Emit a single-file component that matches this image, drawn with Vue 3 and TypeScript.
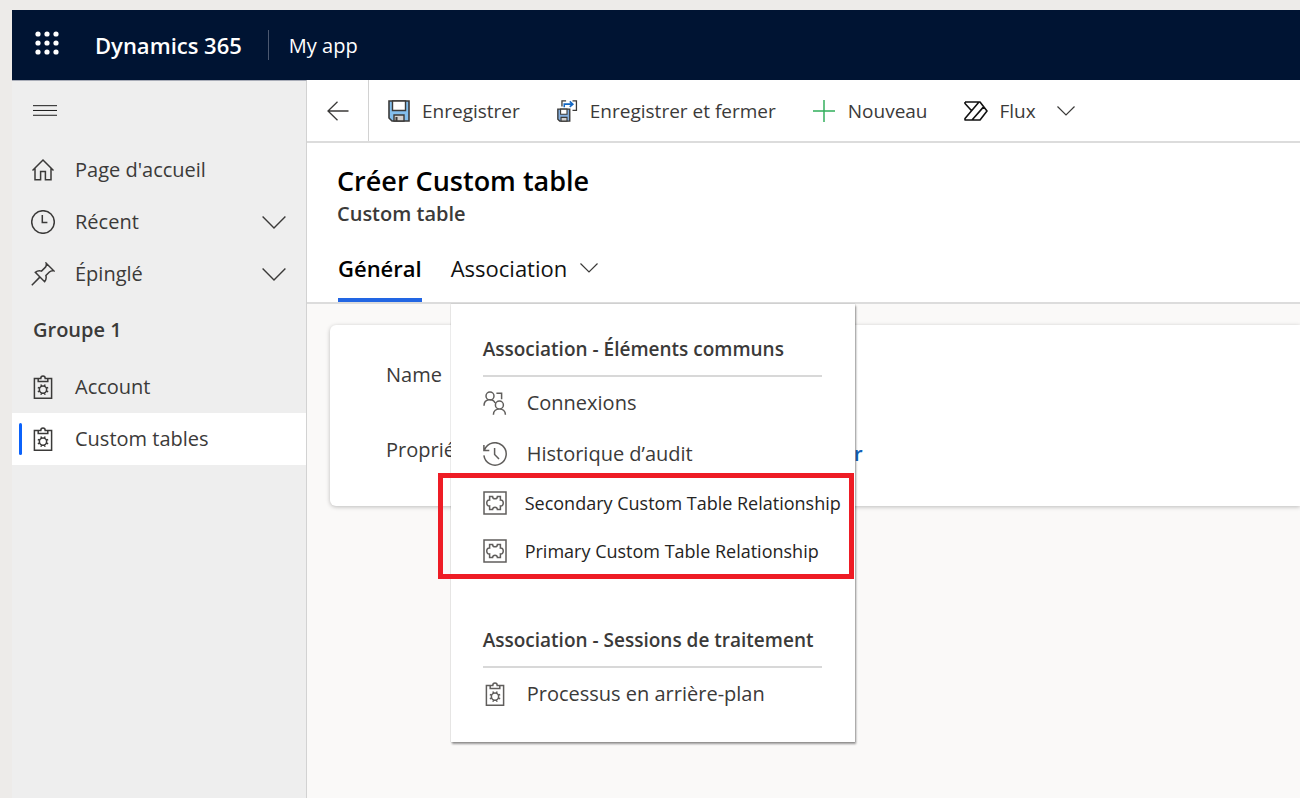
<script setup lang="ts">
import { h, ref, type FunctionalComponent } from 'vue'

type IconName = 'home' | 'clock' | 'pin' | 'clipboard' | 'people' | 'history' | 'puzzle'

const gear: string[] = []
for (let i = 0; i < 8; i++) {
  const a = (i * Math.PI) / 4 + Math.PI / 8
  const c = Math.cos(a)
  const s = Math.sin(a)
  gear.push(`M${(12 + c * 3.6).toFixed(2)} ${(14.6 + s * 3.6).toFixed(2)}L${(12 + c * 5.6).toFixed(2)} ${(14.6 + s * 5.6).toFixed(2)}`)
}

const paths: Record<IconName, string> = {
  home: 'M1.5 12.5L12 2L22.5 12.5M4 10.5V21.7H9.6V13.6H14.4V21.7H20V10.5',
  clock: 'M12 .7A11.3 11.3 0 1 1 12 23.3A11.3 11.3 0 1 1 12 .7ZM11.3 5V12.6H16.4',
  pin: 'M15.2 1.2L22.8 8.8C20.8 8.4 19.6 8.8 18.4 10L14.9 13.5C15.6 16 15.2 17.8 13.6 19.7L4.3 10.4C6.2 8.8 8 8.4 10.5 9.1L14 5.6C15.2 4.4 15.6 3.2 15.2 1.2ZM8.6 15.4L.8 23.2',
  clipboard: `M7.2 3.6H3.4V23.2H20.6V3.6H16.8M7.2 6.4V3.4H9.8C9.8 .2 14.2 .2 14.2 3.4H16.8V6.4ZM12 11A3.6 3.6 0 1 1 12 18.2A3.6 3.6 0 1 1 12 11Z${gear.join('')}`,
  people: 'M7 1A4 4 0 1 1 7 9A4 4 0 1 1 7 1ZM1 14.8C1 7.2 10.5 7.4 12 12M13.4 2.3H18.6V8.2M16.4 10A4 4 0 1 1 16.4 18A4 4 0 1 1 16.4 10ZM10.4 23.8C10.4 16 22.4 16 22.4 23.8',
  history: 'M1.6 7.8A11.2 11.2 0 1 1 .9 13.4M.9 3V8.4H6.3M11.6 6V12.4L16 17',
  puzzle: 'M1 1H23V23H1ZM6.6 9V5.6H9.6C9.8 8.6 14.2 8.6 14.4 5.6H17.4V9C21.2 8.4 21.2 15.6 17.4 15V18.4H14.4C14.2 15.4 9.8 15.4 9.6 18.4H6.6V15C2.8 15.6 2.8 8.4 6.6 9Z',
}

const LineIcon: FunctionalComponent<{ name: IconName }> = (props) =>
  h('svg', { viewBox: '0 0 24 24', fill: 'none', stroke: 'currentColor', 'stroke-width': 1.5, 'aria-hidden': 'true' }, [
    h('path', { d: paths[props.name] }),
  ])
LineIcon.props = ['name']

const shortcuts: { label: string; icon: IconName; expandable: boolean }[] = [
  { label: "Page d'accueil", icon: 'home', expandable: false },
  { label: 'Récent', icon: 'clock', expandable: true },
  { label: 'Épinglé', icon: 'pin', expandable: true },
]
const tables = ['Account', 'Custom tables']
const current = ref('Custom tables')
const menuOpen = ref(true)

const commonItems: { label: string; icon: IconName }[] = [
  { label: 'Connexions', icon: 'people' },
  { label: 'Historique d’audit', icon: 'history' },
]
const relationships = ['Secondary Custom Table Relationship', 'Primary Custom Table Relationship']
</script>

<template>
  <div class="app">
    <header class="topbar">
      <button class="waffle" aria-label="Applications">
        <svg viewBox="0 0 24 24" aria-hidden="true">
          <template v-for="y in 3" :key="y">
            <circle v-for="x in 3" :key="x" :cx="x * 9 - 6" :cy="y * 9 - 6" r="2.6" />
          </template>
        </svg>
      </button>
      <a class="brand" href="#">Dynamics 365</a>
      <a class="app-name" href="#">My app</a>
    </header>

    <div class="body">
      <nav class="sidebar">
        <button class="burger" aria-label="Menu">
          <svg viewBox="0 0 25 12" aria-hidden="true"><path d="M0 1.5H25M0 6.5H25M0 11.5H25" /></svg>
        </button>
        <button v-for="s in shortcuts" :key="s.label" class="nav-item">
          <LineIcon :name="s.icon" class="icon" />
          <span>{{ s.label }}</span>
          <svg v-if="s.expandable" class="chevron" viewBox="0 0 24 13" aria-hidden="true"><path d="M.6 .6L12 12L23.4 .6" /></svg>
        </button>
        <h2 class="group">Groupe 1</h2>
        <a
          v-for="t in tables"
          :key="t"
          href="#"
          class="nav-item"
          :class="{ active: current === t }"
          @click.prevent="current = t"
        >
          <LineIcon name="clipboard" class="icon" />
          <span>{{ t }}</span>
        </a>
      </nav>

      <main class="main">
        <div class="commands">
          <button class="back" aria-label="Retour">
            <svg viewBox="0 0 22 20" aria-hidden="true"><path d="M21.5 10H1M10.5 .8L1 10L10.5 19.2" /></svg>
          </button>
          <button class="command">
            <svg class="cmd-icon" viewBox="0 0 22 22" aria-hidden="true">
              <path d="M1 1H21V21H4L1 18Z" fill="#83beec" stroke="#3b3a39" stroke-width="1.6" />
              <path d="M4.5 1H17.5V10.5H4.5Z" fill="#fff" stroke="#3b3a39" stroke-width="1.4" />
              <path d="M6 21V15H16V21Z" fill="#d2d0ce" stroke="#3b3a39" stroke-width="1.4" />
              <path d="M8.5 17V21" stroke="#3b3a39" stroke-width="2" />
            </svg>
            Enregistrer
          </button>
          <button class="command">
            <svg class="cmd-icon" viewBox="0 0 22 24" fill="none" aria-hidden="true">
              <path d="M1 10H14V23H3L1 21Z" fill="#83aede" stroke="#3b3a39" stroke-width="1.5" />
              <path d="M4 10H11V15.5H4Z" fill="#fff" stroke="#3b3a39" stroke-width="1.2" />
              <path d="M4.5 23V19H11V23Z" fill="#d2d0ce" stroke="#3b3a39" stroke-width="1.2" />
              <path d="M5.5 7V1H10M17 1H21.3V11.3H17" stroke="#3b3a39" stroke-width="1.4" />
              <path d="M8 8V4.5H17M14 1.5L17.4 4.5L14 7.5" stroke="#1267c4" stroke-width="1.7" />
            </svg>
            Enregistrer et fermer
          </button>
          <button class="command">
            <svg class="cmd-icon wide" viewBox="0 0 24 24" aria-hidden="true"><path d="M12 0V24M0 12H24" stroke="#31ae5b" stroke-width="1.6" /></svg>
            Nouveau
          </button>
          <button class="command">
            <svg class="cmd-icon wide" viewBox="0 0 24 20" fill="none" stroke="#111" stroke-width="1.6" stroke-linejoin="round" aria-hidden="true">
              <path d="M1 1H16L23 10L16 19H1V17.5L15 1M1 1V2.5L7.6 9.7M8 19L19.8 5.6" />
            </svg>
            Flux
            <svg class="chevron small" viewBox="0 0 18 10" aria-hidden="true"><path d="M.5 .5L9 9L17.5 .5" /></svg>
          </button>
        </div>

        <header class="record">
          <h1>Créer Custom table</h1>
          <p>Custom table</p>
          <div class="tabs">
            <button class="tab selected">Général</button>
            <div class="tab-wrap">
              <button class="tab" :aria-expanded="menuOpen" @click="menuOpen = !menuOpen">
                Association
                <svg class="chevron small" viewBox="0 0 18 10" aria-hidden="true"><path d="M.5 .5L9 9L17.5 .5" /></svg>
              </button>
              <div v-if="menuOpen" class="menu">
                <section>
                  <h3>Association - Éléments communs</h3>
                  <button v-for="c in commonItems" :key="c.label" class="menu-item">
                    <LineIcon :name="c.icon" class="icon" />{{ c.label }}
                  </button>
                  <div class="highlight">
                    <button v-for="r in relationships" :key="r" class="menu-item related">
                      <LineIcon name="puzzle" class="icon" />{{ r }}
                    </button>
                  </div>
                </section>
                <section>
                  <h3>Association - Sessions de traitement</h3>
                  <button class="menu-item"><LineIcon name="clipboard" class="icon" />Processus en arrière-plan</button>
                </section>
              </div>
            </div>
          </div>
        </header>

        <div class="content">
          <dl class="card">
            <div class="field"><dt>Name</dt></div>
            <div class="field">
              <dt>Propriétaire</dt>
              <dd><a href="#">r</a></dd>
            </div>
          </dl>
        </div>
      </main>
    </div>
  </div>
</template>

<style>
body {
  margin: 0;
  background: #edebe9;
}
</style>

<style scoped>
.app {
  box-sizing: border-box;
  min-height: 100vh;
  padding: 10px 0 0 12px;
  display: flex;
  flex-direction: column;
  overflow: hidden;
  background: #edebe9;
  color: #3b3a39;
  font: 20px/28px "Segoe UI", "Open Sans", "Noto Sans", sans-serif;
}
button {
  font: inherit;
  color: inherit;
  background: none;
  border: 0;
  padding: 0;
  text-align: left;
  white-space: nowrap;
  cursor: pointer;
}
a {
  color: inherit;
  text-decoration: none;
}
h1, h2, h3, p, dl, dd {
  margin: 0;
}
svg {
  display: block;
  flex: none;
}
.topbar {
  height: 70px;
  display: flex;
  align-items: center;
  background: #001433;
  color: #fff;
}
.waffle {
  margin: 0 36px 4px 23px;
}
.waffle svg {
  width: 24px;
  height: 24px;
  fill: #fff;
}
.brand {
  font-size: 22px;
  font-weight: 600;
  padding-right: 26px;
}
.app-name {
  padding: 2px 0 0 20px;
  border-left: 1px solid #4b5870;
}
.body {
  flex: 1;
  display: grid;
  grid-template-columns: 295px minmax(0, 1fr);
}
.sidebar {
  box-sizing: border-box;
  background: #eeeeee;
  border-top: 1px solid #a9adb8;
  border-right: 1px solid #d2d2d2;
  display: flex;
  flex-direction: column;
}
.burger {
  height: 63px;
  padding: 0 0 6px 21px;
}
.burger svg {
  width: 24px;
  height: 12px;
  stroke: #111;
}
.nav-item {
  position: relative;
  display: flex;
  align-items: center;
  height: 52px;
  padding: 0 20px 0 19px;
}
.icon {
  width: 24px;
  height: 24px;
}
.nav-item span {
  margin-left: 20px;
  flex: 1;
}
.chevron {
  width: 24px;
  height: 13px;
  fill: none;
  stroke: #3b3a39;
  stroke-width: 1.4;
}
.chevron.small {
  width: 18px;
  height: 10px;
  stroke-width: 1.2;
}
.group {
  font-size: 20px;
  font-weight: 600;
  line-height: 28px;
  padding: 16px 21px 17px;
}
.nav-item.active {
  background: #fff;
}
.nav-item.active::before {
  content: "";
  position: absolute;
  left: 7px;
  top: 10px;
  bottom: 10px;
  width: 3px;
  border-radius: 2px;
  background: #0b62fb;
}
.main {
  display: flex;
  flex-direction: column;
  background: #faf9f8;
}
.commands {
  height: 61px;
  display: flex;
  background: #fff;
  border-bottom: 2px solid #dcdcdc;
  font-size: 19px;
}
.back {
  width: 62px;
  padding-left: 20px;
  border-right: 1px solid #d2d2d2;
}
.back svg {
  width: 22px;
  height: 20px;
  fill: none;
  stroke: #3b3a39;
  stroke-width: 1.3;
}
.command {
  display: flex;
  align-items: center;
  gap: 12px;
  padding: 0 17px 0 19px;
}
.cmd-icon {
  width: 22px;
  height: 22px;
}
.cmd-icon.wide {
  width: 24px;
}
.command .chevron {
  margin-left: 9px;
}
.record {
  background: #fff;
  border-bottom: 2px solid #dcdcdc;
  padding: 20px 30px 0;
}
h1 {
  color: #000;
  font-size: 27px;
  font-weight: 600;
  line-height: 36px;
}
.record p {
  font-weight: 600;
  line-height: 30px;
}
.tabs {
  display: flex;
  gap: 29px;
  height: 73px;
  padding-left: 1px;
}
.tab {
  box-sizing: border-box;
  height: 73px;
  display: flex;
  align-items: center;
  gap: 13px;
  padding-top: 8px;
  border-bottom: 4px solid transparent;
  color: #111;
  font-size: 22px;
}
.tab.selected {
  font-weight: 600;
  color: #000;
  border-bottom-color: #2266e3;
}
.tab-wrap {
  position: relative;
}
.menu {
  position: absolute;
  z-index: 2;
  top: 75px;
  left: 0;
  box-sizing: border-box;
  width: 404px;
  padding: 31px 0 23px 32px;
  background: #fff;
  box-shadow: 1px 2px 2px rgba(0, 0, 0, 0.4), 0 0 1px rgba(0, 0, 0, 0.3);
}
.menu h3 {
  margin-right: 33px;
  padding-bottom: 12px;
  border-bottom: 2px solid #d8d8d8;
  font-size: 19px;
  font-weight: 600;
  line-height: 28px;
  white-space: nowrap;
}
.menu-item {
  display: flex;
  align-items: center;
  gap: 20px;
  height: 51px;
}
.menu-item .icon {
  color: #605e5c;
}
.highlight {
  position: relative;
  margin-bottom: 51px;
}
.highlight::after {
  content: "";
  position: absolute;
  inset: -6px 1px -4px -45px;
  border: 5px solid #ee1c25;
  pointer-events: none;
}
.related {
  height: 48px;
  gap: 18px;
  color: #252423;
  font-size: 18px;
}
.content {
  flex: 1;
  padding: 21px 0 0 23px;
}
.card {
  box-sizing: border-box;
  min-height: 181px;
  padding: 12px 56px;
  background: #fff;
  border-radius: 6px 0 0 6px;
  box-shadow: 0 1px 4px rgba(0, 0, 0, 0.25);
}
.field {
  display: flex;
  align-items: center;
  height: 75px;
}
.field dt {
  width: 468px;
}
.field dd {
  padding-top: 8px;
}
.field a {
  color: #1160b7;
  font-weight: 600;
}
</style>
